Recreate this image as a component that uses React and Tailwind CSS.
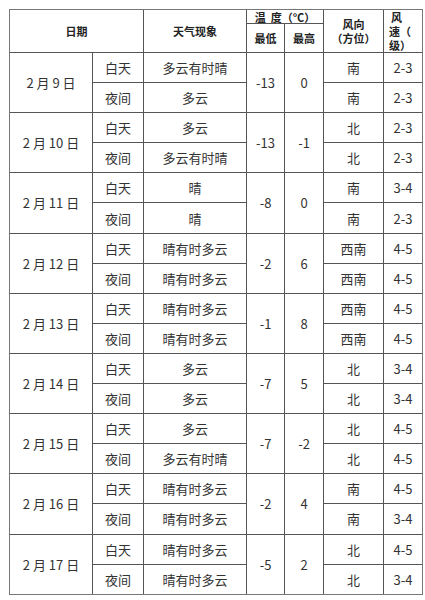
import React from "react";

const days = [
  ["2 月 9 日", "多云有时晴", "多云", "-13", "0", "南", "2-3", "南", "2-3"],
  ["2 月 10 日", "多云", "多云有时晴", "-13", "-1", "北", "2-3", "北", "2-3"],
  ["2 月 11 日", "晴", "晴", "-8", "0", "南", "3-4", "南", "2-3"],
  ["2 月 12 日", "晴有时多云", "晴有时多云", "-2", "6", "西南", "4-5", "西南", "4-5"],
  ["2 月 13 日", "晴有时多云", "晴有时多云", "-1", "8", "西南", "4-5", "西南", "4-5"],
  ["2 月 14 日", "多云", "多云", "-7", "5", "北", "3-4", "北", "3-4"],
  ["2 月 15 日", "多云", "多云有时晴", "-7", "-2", "北", "4-5", "北", "4-5"],
  ["2 月 16 日", "晴有时多云", "晴有时多云", "-2", "4", "南", "4-5", "南", "3-4"],
  ["2 月 17 日", "晴有时多云", "晴有时多云", "-5", "2", "北", "4-5", "北", "3-4"],
];

const cell = "bg-white flex items-center justify-center text-[13px] text-[#333] leading-none";
const head = "bg-white flex items-center justify-center text-[11px] font-bold text-[#222] leading-[14px] text-center";

export default function App() {
  return (
    <div
      className="w-[425px] h-[600px] bg-white pt-[9px] pl-[9px]"
      style={{ fontFamily: '"Noto Sans CJK SC", "Noto Sans", sans-serif' }}
    >
      <div className="grid w-[414px] grid-cols-[82px_50px_102px_37px_38px_59px_38px] grid-rows-[13px_28px_repeat(18,29.1px)] gap-px bg-[#555] border border-[#777]">
        <div className={head + " col-span-2 row-span-2"}>日期</div>
        <div className={head + " row-span-2"}>天气现象</div>
        <div className={head + " col-span-2 whitespace-pre"}>温  度（°C）</div>
        <div className={head + " row-span-2 flex-col"}>
          <span>风向</span>
          <span>（方位）</span>
        </div>
        <div className={head + " row-span-2 flex-col !items-start pl-[5px] leading-[13.5px]"}>
          <span className="pl-[2px]">风</span>
          <span>速（</span>
          <span>级）</span>
        </div>
        <div className={head}>最低</div>
        <div className={head}>最高</div>
        {days.map((d, i) => (
          <React.Fragment key={i}>
            <div className={cell + " row-span-2"}>{d[0]}</div>
            <div className={cell}>白天</div>
            <div className={cell}>{d[1]}</div>
            <div className={cell + " row-span-2"}>{d[3]}</div>
            <div className={cell + " row-span-2"}>{d[4]}</div>
            <div className={cell}>{d[5]}</div>
            <div className={cell}>{d[6]}</div>
            <div className={cell}>夜间</div>
            <div className={cell}>{d[2]}</div>
            <div className={cell}>{d[7]}</div>
            <div className={cell}>{d[8]}</div>
          </React.Fragment>
        ))}
      </div>
    </div>
  );
}
